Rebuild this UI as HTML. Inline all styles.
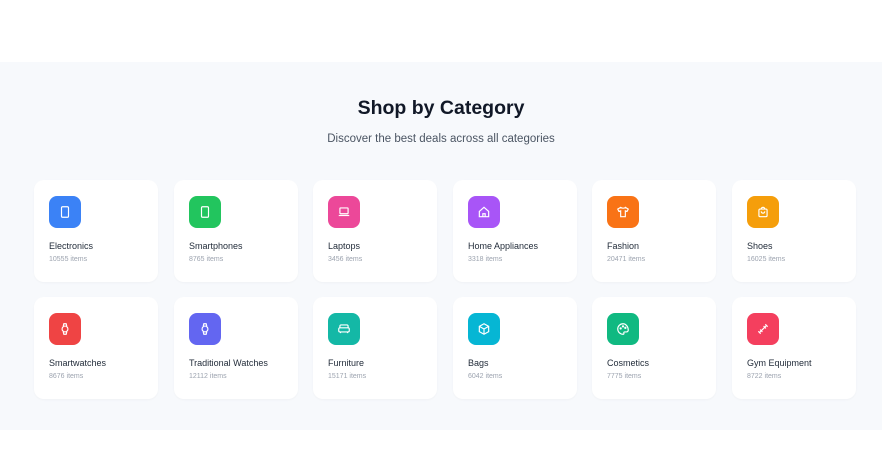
<!DOCTYPE html>
<html><head><style>
*{margin:0;padding:0;box-sizing:border-box}
body{width:882px;height:450px;background:#fff;font-family:"Liberation Sans",sans-serif;overflow:hidden;position:relative}
.sec{position:absolute;left:0;top:62px;width:882px;height:368px;background:#f7f9fc}
h2{position:absolute;top:97px;width:100%;text-align:center;font-size:19.5px;font-weight:bold;color:#111827}
.sub{position:absolute;top:133px;width:100%;text-align:center;font-size:11.5px;color:#4b5563}
.card{position:absolute;width:124px;height:102px;background:#fff;border-radius:10px;box-shadow:0 1px 2px rgba(0,0,0,.03)}
.ic{position:absolute;left:15px;top:16px;width:32px;height:32px;border-radius:8px;display:flex;align-items:center;justify-content:center}
.t{position:absolute;left:15px;top:61px;font-size:9px;color:#1f2937}
.c{position:absolute;left:15px;top:76px;font-size:7px;color:#9ca3af}
</style></head><body>
<div class="sec"></div>
<h2>Shop by Category</h2>
<div class="sub">Discover the best deals across all categories</div>

<div class="card" style="left:34px;top:180px"><div class="ic" style="background:#3b82f6"><svg width="14" height="14" viewBox="0 0 24 24" fill="none" stroke="#fff" stroke-width="2"><rect x="6" y="3" width="12" height="18" rx="2"/></svg></div><div class="t">Electronics</div><div class="c">10555 items</div></div>
<div class="card" style="left:174px;top:180px"><div class="ic" style="background:#22c55e"><svg width="14" height="14" viewBox="0 0 24 24" fill="none" stroke="#fff" stroke-width="2"><rect x="6" y="3" width="12" height="18" rx="2"/></svg></div><div class="t">Smartphones</div><div class="c">8765 items</div></div>
<div class="card" style="left:313px;top:180px"><div class="ic" style="background:#ec4899"><svg width="14" height="14" viewBox="0 0 24 24" fill="none" stroke="#fff" stroke-width="2"><rect x="5" y="5" width="14" height="10" rx="1"/><path d="M3 18h18"/></svg></div><div class="t">Laptops</div><div class="c">3456 items</div></div>
<div class="card" style="left:453px;top:180px"><div class="ic" style="background:#a855f7"><svg width="14" height="14" viewBox="0 0 24 24" fill="none" stroke="#fff" stroke-width="2"><path d="M4 11l8-7 8 7v9H4z"/><path d="M10 20v-5h4v5"/></svg></div><div class="t">Home Appliances</div><div class="c">3318 items</div></div>
<div class="card" style="left:592px;top:180px"><div class="ic" style="background:#f97316"><svg width="14" height="14" viewBox="0 0 24 24" fill="none" stroke="#fff" stroke-width="2"><path d="M8 4l-5 3 2 4 3-1v10h8V10l3 1 2-4-5-3c-1 2-5 2-8 0z"/></svg></div><div class="t">Fashion</div><div class="c">20471 items</div></div>
<div class="card" style="left:732px;top:180px"><div class="ic" style="background:#f59e0b"><svg width="14" height="14" viewBox="0 0 24 24" fill="none" stroke="#fff" stroke-width="2"><rect x="5" y="7" width="14" height="13" rx="2"/><path d="M9 7a3 3 0 016 0M9 11a3 3 0 006 0"/></svg></div><div class="t">Shoes</div><div class="c">16025 items</div></div>

<div class="card" style="left:34px;top:297px"><div class="ic" style="background:#ef4444"><svg width="14" height="14" viewBox="0 0 24 24" fill="none" stroke="#fff" stroke-width="2"><circle cx="12" cy="12" r="5"/><path d="M9 7l1-4h4l1 4M9 17l1 4h4l1-4"/></svg></div><div class="t">Smartwatches</div><div class="c">8676 items</div></div>
<div class="card" style="left:174px;top:297px"><div class="ic" style="background:#6366f1"><svg width="14" height="14" viewBox="0 0 24 24" fill="none" stroke="#fff" stroke-width="2"><circle cx="12" cy="12" r="5"/><path d="M9 7l1-4h4l1 4M9 17l1 4h4l1-4"/></svg></div><div class="t">Traditional Watches</div><div class="c">12112 items</div></div>
<div class="card" style="left:313px;top:297px"><div class="ic" style="background:#14b8a6"><svg width="14" height="14" viewBox="0 0 24 24" fill="none" stroke="#fff" stroke-width="2"><path d="M5 10V7a2 2 0 012-2h10a2 2 0 012 2v3"/><rect x="3" y="10" width="18" height="7" rx="2"/><path d="M6 17v2M18 17v2"/></svg></div><div class="t">Furniture</div><div class="c">15171 items</div></div>
<div class="card" style="left:453px;top:297px"><div class="ic" style="background:#06b6d4"><svg width="14" height="14" viewBox="0 0 24 24" fill="none" stroke="#fff" stroke-width="2"><path d="M12 3l8 4.5v9L12 21l-8-4.5v-9z"/><path d="M4 7.5l8 4.5 8-4.5M12 12v9"/></svg></div><div class="t">Bags</div><div class="c">6042 items</div></div>
<div class="card" style="left:592px;top:297px"><div class="ic" style="background:#10b981"><svg width="14" height="14" viewBox="0 0 24 24" fill="none" stroke="#fff" stroke-width="2"><path d="M12 3a9 9 0 100 18c1.5 0 2-1 1.5-2s0-2 1.5-2H18a3 3 0 003-3c0-6-4-11-9-11z"/><circle cx="8" cy="11" r="1"/><circle cx="12" cy="7.5" r="1"/><circle cx="16" cy="10" r="1"/></svg></div><div class="t">Cosmetics</div><div class="c">7775 items</div></div>
<div class="card" style="left:732px;top:297px"><div class="ic" style="background:#f43f5e"><svg width="14" height="14" viewBox="0 0 24 24" fill="none" stroke="#fff" stroke-width="2"><path d="M6 18l12-12M4 16l4 4M16 4l4 4M7 13l4 4M13 7l4 4"/></svg></div><div class="t">Gym Equipment</div><div class="c">8722 items</div></div>
</body></html>
